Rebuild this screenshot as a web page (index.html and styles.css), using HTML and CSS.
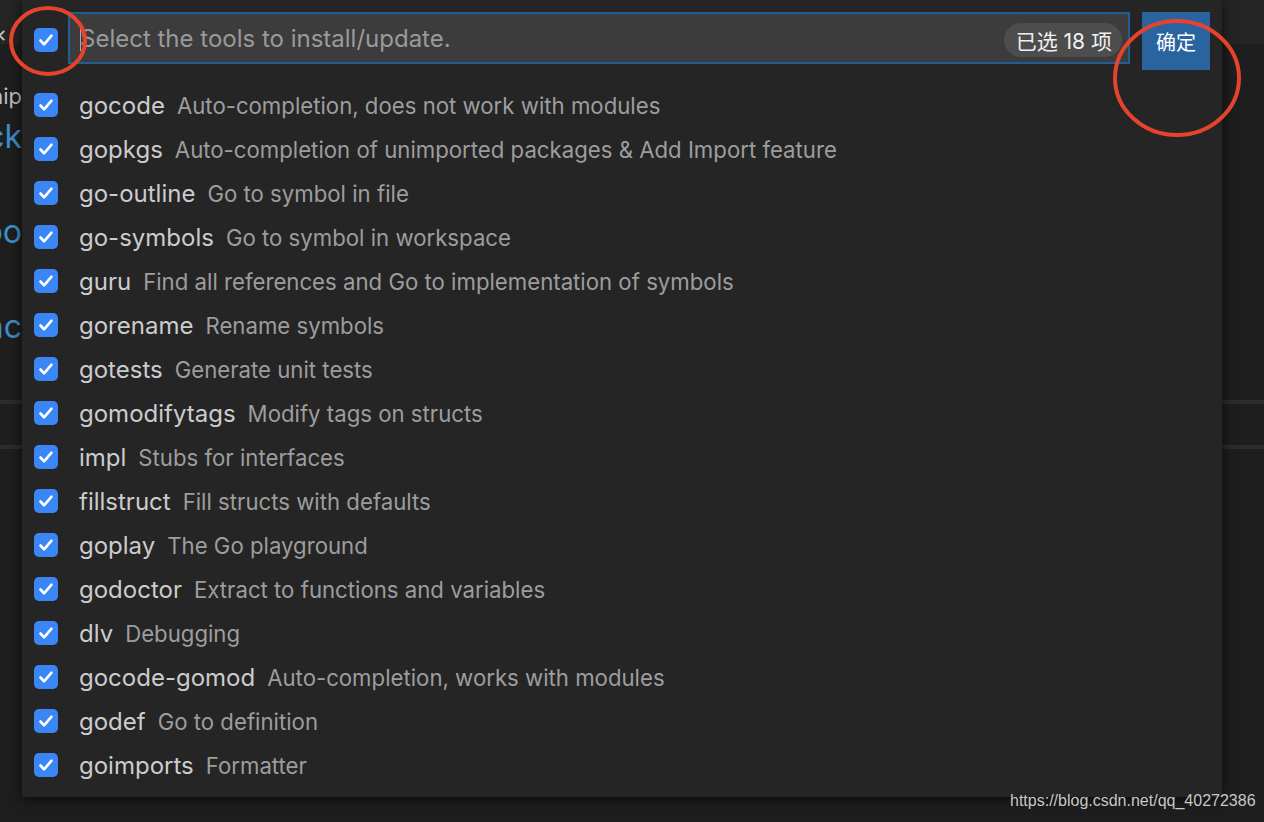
FILE: index.html
```html
<!DOCTYPE html>
<html lang="zh-CN">
<head>
    <meta charset="UTF-8">
    <title>Go: Install/Update Tools</title>
    <link rel="stylesheet" href="styles.css">
</head>
<body>
    <div class="editor">
        <div class="tabs"></div>
        <div class="peek">
            <div class="peek-line close"><span>✕</span></div>
            <div class="peek-line grey"><span>snip</span></div>
            <div class="peek-line blue"><span>ck</span></div>
            <div class="peek-line blue gap"><span>po</span></div>
            <div class="peek-line blue gap"><span>nc</span></div>
        </div>
        <div class="rule first"></div>
        <div class="rule"></div>
    </div>

    <div class="quick-pick">
        <div class="header">
            <span class="check"><svg viewBox="0 0 24 24"><path d="M6.5 12.5l3.6 3.8 7.4-8.6"/></svg></span>
            <div class="input">
                <span class="caret"></span>
                <span class="placeholder">Select the tools to install/update.</span>
                <span class="count">已选 18 项</span>
            </div>
            <button class="ok">确定</button>
        </div>
        <ul class="list" id="list"></ul>
    </div>

    <svg class="mark mark-left" viewBox="0 0 80 72"><ellipse cx="40" cy="36" rx="37" ry="33"/></svg>
    <svg class="mark mark-right" viewBox="0 0 132 120"><ellipse cx="66" cy="60" rx="62" ry="57"/></svg>

    <div class="watermark">https://blog.csdn.net/qq_40272386</div>

    <script>
        const tools = [
            ['gocode', 'Auto-completion, does not work with modules'],
            ['gopkgs', 'Auto-completion of unimported packages & Add Import feature'],
            ['go-outline', 'Go to symbol in file'],
            ['go-symbols', 'Go to symbol in workspace'],
            ['guru', 'Find all references and Go to implementation of symbols'],
            ['gorename', 'Rename symbols'],
            ['gotests', 'Generate unit tests'],
            ['gomodifytags', 'Modify tags on structs'],
            ['impl', 'Stubs for interfaces'],
            ['fillstruct', 'Fill structs with defaults'],
            ['goplay', 'The Go playground'],
            ['godoctor', 'Extract to functions and variables'],
            ['dlv', 'Debugging'],
            ['gocode-gomod', 'Auto-completion, works with modules'],
            ['godef', 'Go to definition'],
            ['goimports', 'Formatter']
        ];

        const list = document.getElementById('list');
        const tick = '<span class="check"><svg viewBox="0 0 24 24"><path d="M6.5 12.5l3.6 3.8 7.4-8.6"/></svg></span>';

        tools.forEach(([name, desc]) => {
            const li = document.createElement('li');
            li.className = 'row';
            li.innerHTML = tick +
                '<span class="name">' + name + '</span>' +
                '<span class="desc">' + desc + '</span>';
            list.appendChild(li);
        });
    </script>
</body>
</html>
```

FILE: styles.css
```css
* {
    margin: 0;
    padding: 0;
    box-sizing: border-box;
}

body {
    width: 1264px;
    height: 822px;
    overflow: hidden;
    background-color: #1e1e1e;
    font-family: Inter, "Noto Sans CJK SC", sans-serif;
    position: relative;
}

/* editor behind the picker */
.editor {
    height: 100%;
}

.tabs {
    height: 44px;
    background-color: #252526;
}

.peek {
    width: 22px;
    overflow: hidden;
}

.peek-line {
    display: flex;
    justify-content: flex-end;
    white-space: nowrap;
    height: 40px;
    align-items: center;
}

.peek-line.close {
    position: absolute;
    top: 22px;
    left: 0;
    width: 22px;
    height: 26px;
    color: #c5c5c5;
    font-size: 18px;
    justify-content: flex-start;
    margin-left: -8px;
}

.peek-line.grey {
    color: #bdbdbd;
    font-size: 22px;
    margin-top: 32px;
    height: 40px;
}

.peek-line.blue {
    color: #3f8fcb;
    font-size: 32px;
}

.peek-line.gap {
    margin-top: 55px;
}

.rule {
    height: 4px;
    background-color: #2c2c2c;
    margin-top: 41px;
}

.rule.first {
    margin-top: 54px;
}

/* quick pick */
.quick-pick {
    position: absolute;
    left: 22px;
    top: 0;
    width: 1200px;
    height: 797px;
    background-color: #252526;
    box-shadow: 0 2px 12px rgba(0, 0, 0, 0.7);
}

.header {
    display: flex;
    align-items: flex-start;
    padding: 12px 12px 0 12px;
    height: 83px;
}

.header > .check {
    margin-top: 16px;
}

.check {
    width: 24px;
    height: 24px;
    border-radius: 5px;
    background-color: #3b86f6;
    flex-shrink: 0;
    display: flex;
}

.check svg {
    width: 24px;
    height: 24px;
    fill: none;
    stroke: #ffffff;
    stroke-width: 2.6;
    stroke-linecap: round;
    stroke-linejoin: round;
}

.input {
    margin-left: 10px;
    width: 1062px;
    height: 52px;
    background-color: #3c3c3c;
    border: 2px solid #1f5f97;
    display: flex;
    align-items: center;
    padding: 0 6px 0 10px;
}

.caret {
    width: 1px;
    height: 26px;
    background-color: #aeaeae;
}

.placeholder {
    color: #9a9a9a;
    font-size: 24px;
    flex: 1;
    margin-left: -1px;
}

.count {
    background-color: #4d4d4d;
    color: #f0f0f0;
    font-size: 21px;
    border-radius: 17px;
    height: 34px;
    padding: 0 10px 0 12px;
    display: flex;
    align-items: center;
    margin-top: 4px;
}

.ok {
    margin-left: 12px;
    width: 68px;
    height: 58px;
    border: none;
    background-color: #2964a0;
    color: #ffffff;
    font-family: "Noto Sans CJK SC", sans-serif;
    font-size: 20px;
}

.list {
    list-style: none;
}

.row {
    display: flex;
    align-items: center;
    height: 44px;
    padding-left: 12px;
    white-space: nowrap;
}

.name {
    color: #cccccc;
    font-size: 24px;
    margin-left: 21px;
}

.desc {
    color: #9d9d9d;
    font-size: 22.2px;
    margin-left: 12px;
}

/* red annotation rings */
.mark {
    position: absolute;
    fill: none;
    stroke: #e5432b;
    stroke-width: 4;
}

.mark-left {
    left: 8px;
    top: 5px;
    width: 80px;
    height: 72px;
}

.mark-right {
    left: 1111px;
    top: 18px;
    width: 132px;
    height: 120px;
}

.watermark {
    position: absolute;
    left: 1010px;
    top: 792px;
    color: #c8c8c8;
    font-family: "Liberation Sans", Arial, sans-serif;
    font-size: 16px;
}
```
